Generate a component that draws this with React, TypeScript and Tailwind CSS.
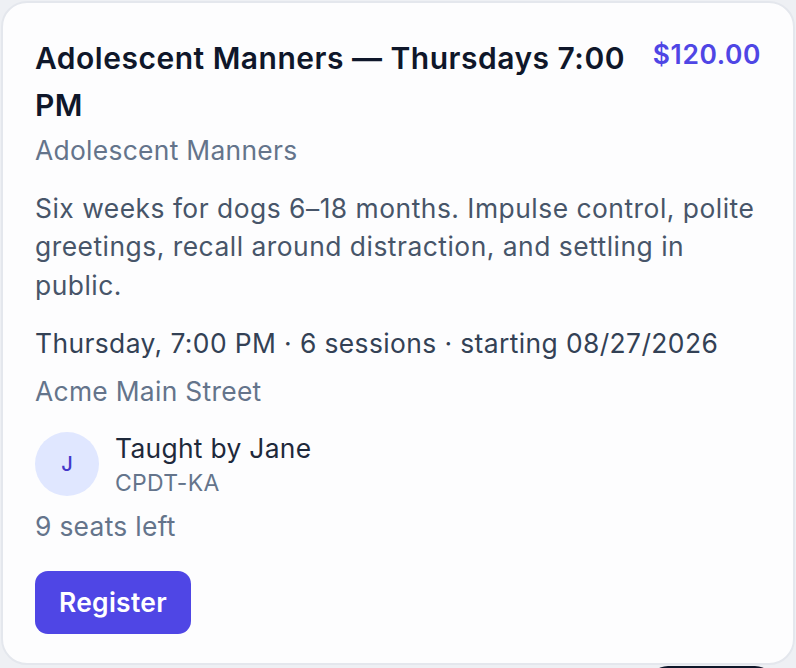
export default function App() {
  return (
    <div className="w-[796px] h-[668px] overflow-hidden bg-[#eef0f4] pl-px pt-px" style={{ fontFamily: 'Inter, "Noto Sans", sans-serif' }}>
      <div className="w-[794px] h-[664px] rounded-[26px] border-2 border-[#e4e7ed] bg-[#fdfdfe] px-[32px] pt-[32px] flex flex-col">
        <div className="flex items-start gap-[26px]">
          <h2 className="flex-1 text-[30px] leading-[47px] font-semibold tracking-[0.5px] text-[#0f172a]">
            Adolescent Manners — Thursdays 7:00 PM
          </h2>
          <div className="text-[26.4px] leading-[38px] font-semibold tracking-[0.6px] text-[#4f46e5]">$120.00</div>
        </div>
        <div className="mt-[2px] text-[26.4px] leading-[38px] tracking-[0.3px] text-[#64748b]">Adolescent Manners</div>
        <p className="mt-[20px] text-[26.4px] leading-[38.4px] tracking-[0.5px] text-[#475569]">
          Six weeks for dogs 6–18 months. Impulse control, polite greetings, recall around distraction, and settling in public.
        </p>
        <div className="mt-[20px] text-[26.4px] leading-[38.4px] tracking-[0.4px] text-[#334155]">
          Thursday, 7:00 PM · 6 sessions · starting 08/27/2026
        </div>
        <div className="mt-[9px] text-[26.4px] leading-[38.4px] tracking-[0.3px] text-[#64748b]">Acme Main Street</div>
        <div className="mt-[19px] flex items-center gap-[16px]">
          <div className="w-[64px] h-[64px] rounded-full bg-[#e0e7ff] flex items-center justify-center text-[20px] font-medium text-[#4338ca]">
            J
          </div>
          <div className="flex flex-col">
            <div className="text-[26.4px] leading-[38.4px] tracking-[0.3px] text-[#1e293b]">Taught by Jane</div>
            <div className="text-[23px] leading-[32px] tracking-[0.3px] text-[#64748b]">CPDT-KA</div>
          </div>
        </div>
        <div className="mt-[8px] text-[26.4px] leading-[38.4px] tracking-[0.3px] text-[#64748b]">9 seats left</div>
        <div className="mt-[25px]">
          <button className="h-[63px] px-[24px] rounded-[13px] bg-[#4f46e5] text-white text-[26.4px] font-semibold tracking-[0.3px]">
            Register
          </button>
        </div>
      </div>
      <div className="ml-[647px] mt-[1px] w-[127px] h-[40px] rounded-[20px] bg-[#0f172a]" />
    </div>
  )
}
